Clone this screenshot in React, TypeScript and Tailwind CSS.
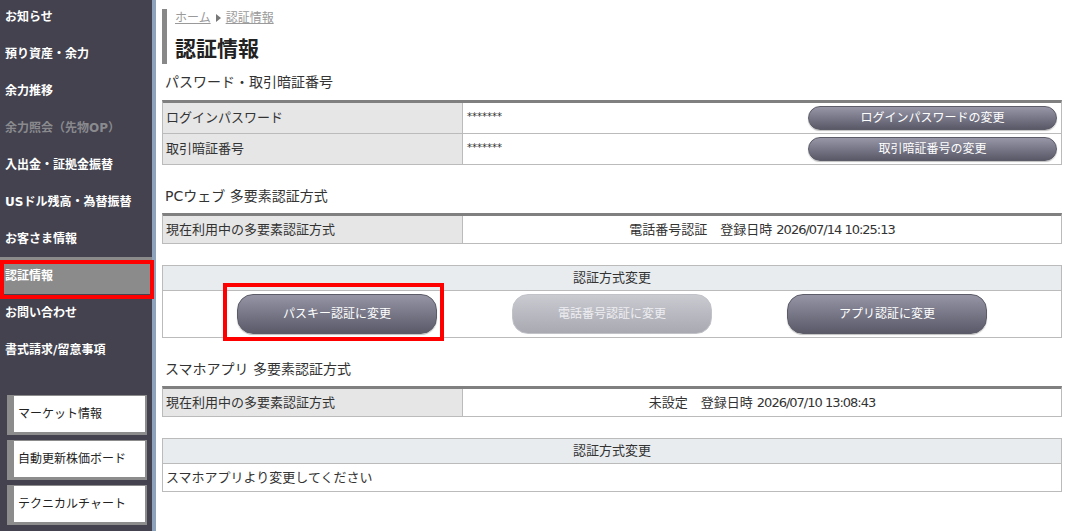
const menu: { label: string; muted?: boolean; active?: boolean }[] = [
  { label: "お知らせ" },
  { label: "預り資産・余力" },
  { label: "余力推移" },
  { label: "余力照会（先物OP）", muted: true },
  { label: "入出金・証拠金振替" },
  { label: "USドル残高・為替振替" },
  { label: "お客さま情報" },
  { label: "認証情報", active: true },
  { label: "お問い合わせ" },
  { label: "書式請求/留意事項" },
];

const tools = ["マーケット情報", "自動更新株価ボード", "テクニカルチャート"];

function PillButton({ label, className = "" }: { label: string; className?: string }) {
  return (
    <button
      className={
        "flex items-center justify-center rounded-full border border-[#5c5c68] bg-linear-to-b from-[#9797a8] to-[#595968] text-[12px] text-white shadow-[0_1px_1px_rgba(0,0,0,0.25)] " +
        className
      }
    >
      {label}
    </button>
  );
}

function MethodButton({ label, disabled }: { label: string; disabled?: boolean }) {
  if (disabled) {
    return (
      <button className="flex h-[40px] w-[200px] items-center justify-center rounded-[16px] border border-[#c2c3c9] bg-linear-to-b from-[#cacbd1] to-[#a8a9b1] text-[12px] text-[#eeeef2]">
        {label}
      </button>
    );
  }
  return (
    <button className="flex h-[40px] w-[200px] items-center justify-center rounded-[16px] border border-[#5c5c68] bg-linear-to-b from-[#9595a6] to-[#5a5a69] text-[12px] text-white shadow-[0_1px_1px_rgba(0,0,0,0.25)]">
      {label}
    </button>
  );
}

function SectionTitle({ children, top }: { children: string; top: string }) {
  return <div className={"flex h-[34px] items-center pl-[3px] text-[14px] text-[#333] " + top}>{children}</div>;
}

function StatusTable({ status, date }: { status: string; date: string }) {
  return (
    <div className="border-x border-t-[3px] border-b border-x-[#bbb] border-t-[#808080] border-b-[#bbb]">
      <div className="flex h-[27px]">
        <div className="flex w-[300px] items-center border-r border-[#bbb] bg-[#e6e6e6] pl-[3px] text-[13px]">
          現在利用中の多要素認証方式
        </div>
        <div className="flex flex-1 items-center justify-center text-[13px]">
          <span>{status}　登録日時&nbsp;</span>
          <span className="tracking-[-1px]">{date}</span>
        </div>
      </div>
    </div>
  );
}

export default function App() {
  return (
    <div className="flex h-[531px] w-[1080px] overflow-hidden bg-white font-['DejaVu_Sans','Noto_Sans_CJK_JP',sans-serif] text-[#333]">
      {/* side navigation */}
      <aside className="w-[156px] shrink-0 border-r-4 border-[#8ea2bb] bg-[#43424e]">
        <nav className="mt-[-2px] flex flex-col">
          {menu.map((m) => (
            <div
              key={m.label}
              className={
                "relative flex h-[37px] items-center pl-[5px] text-[12px] font-bold " +
                (m.active ? "bg-[#8b8b8b] text-white" : m.muted ? "text-[#8a8a8e]" : "text-white")
              }
            >
              {m.label}
              {m.active && (
                <span className="pointer-events-none absolute left-0 top-[3px] h-[39px] w-[154px] border-4 border-[#ff0000]" />
              )}
            </div>
          ))}
        </nav>
        <div className="mt-[27px] flex flex-col gap-[5px] pl-[7px] pr-[5px]">
          {tools.map((t) => (
            <div
              key={t}
              className="flex h-[40px] items-center border-t border-r-2 border-b-[3px] border-l-[7px] border-[#8c8c8c] bg-white pl-[4px] text-[12px] text-[#222]"
            >
              {t}
            </div>
          ))}
        </div>
      </aside>

      {/* main content */}
      <main className="w-[906px] pl-[6px]">
        <div className="mt-[9px] h-[55px] border-l-[5px] border-[#888] pl-[8px]">
          <div className="flex h-[18px] items-center gap-[5px] text-[12px] text-[#9a9a9a]">
            <span className="underline">ホーム</span>
            <svg width="5" height="8" viewBox="0 0 5 8" className="text-[#777]">
              <path d="M0 0 L5 4 L0 8 Z" fill="currentColor" />
            </svg>
            <span className="underline">認証情報</span>
          </div>
          <h1 className="mt-[7px] flex h-[30px] items-center text-[21px] font-bold leading-none text-[#222]">
            認証情報
          </h1>
        </div>

        <div className="flex h-[36px] items-center pl-[3px] text-[14px] text-[#333]">パスワード・取引暗証番号</div>
        <div className="border-x border-t-[3px] border-x-[#bbb] border-t-[#808080]">
          {[
            ["ログインパスワード", "ログインパスワードの変更"],
            ["取引暗証番号", "取引暗証番号の変更"],
          ].map(([label, action]) => (
            <div key={label} className="flex h-[31px] border-b border-[#bbb]">
              <div className="flex w-[300px] items-center border-r border-[#bbb] bg-[#e6e6e6] pl-[3px] text-[13px]">
                {label}
              </div>
              <div className="flex flex-1 items-center justify-between pl-[4px] pr-[4px]">
                <span className="-mt-[3px] text-[10px]">*******</span>
                <PillButton label={action} className="h-[24px] w-[249px]" />
              </div>
            </div>
          ))}
        </div>

        <SectionTitle top="mt-[14px]">PCウェブ 多要素認証方式</SectionTitle>
        <StatusTable status="電話番号認証" date="2026/07/14 10:25:13" />

        <div className="mt-[21px] border border-[#bbb]">
          <div className="flex h-[25px] items-center justify-center border-b border-[#bbb] bg-[#e8ecef] text-[13px]">
            認証方式変更
          </div>
          <div className="flex h-[46px] items-center justify-center gap-[75px]">
            <div className="relative">
              <MethodButton label="パスキー認証に変更" />
              <span className="pointer-events-none absolute left-[-14px] top-[-11px] h-[58px] w-[221px] border-4 border-[#ff0000]" />
            </div>
            <MethodButton label="電話番号認証に変更" disabled />
            <MethodButton label="アプリ認証に変更" />
          </div>
        </div>

        <SectionTitle top="mt-[14px]">スマホアプリ 多要素認証方式</SectionTitle>
        <StatusTable status="未設定" date="2026/07/10 13:08:43" />

        <div className="mt-[21px] border border-[#bbb]">
          <div className="flex h-[25px] items-center justify-center border-b border-[#bbb] bg-[#e8ecef] text-[13px]">
            認証方式変更
          </div>
          <div className="flex h-[27px] items-center pl-[3px] text-[13px]">スマホアプリより変更してください</div>
        </div>
      </main>
    </div>
  );
}
